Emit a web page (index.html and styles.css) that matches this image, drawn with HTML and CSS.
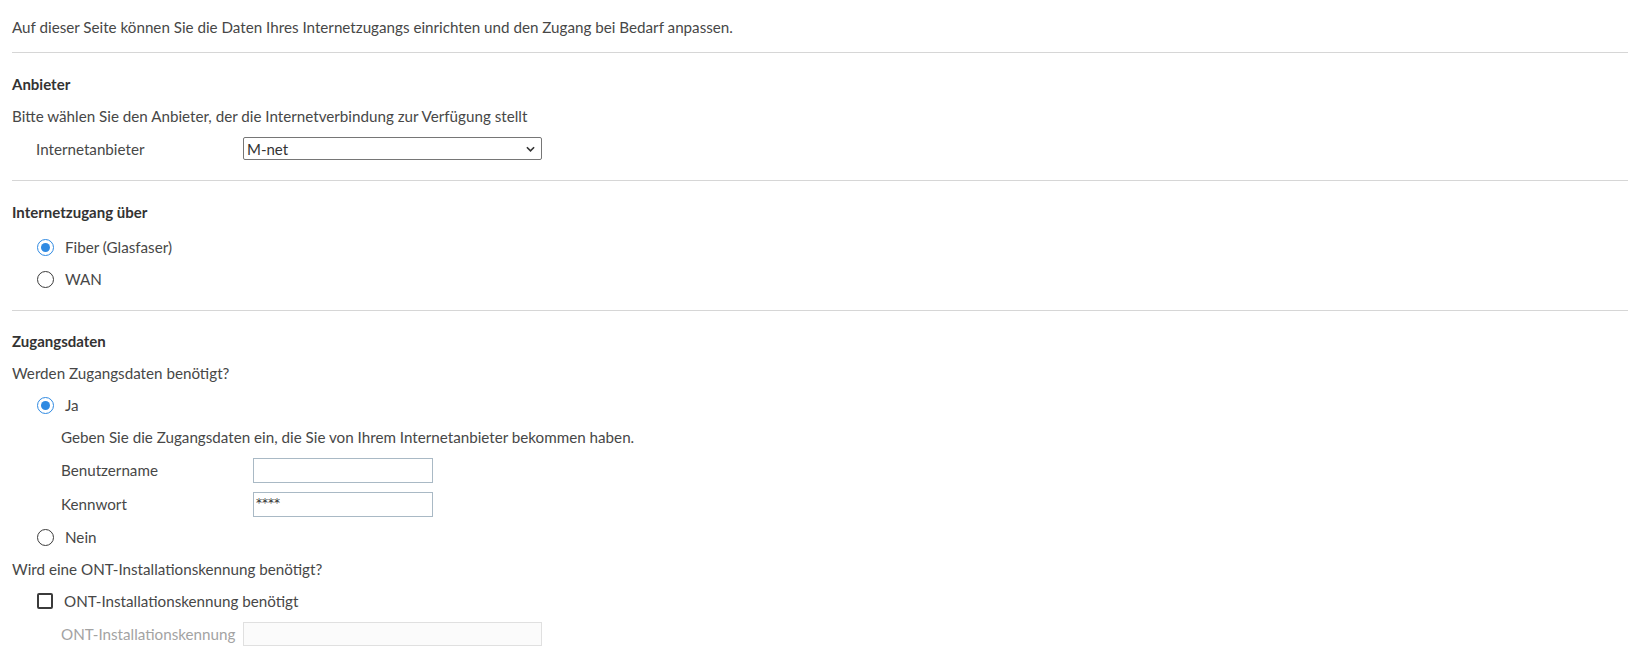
FILE: index.html
```html
<!DOCTYPE html>
<html lang="de">
<head>
    <meta charset="UTF-8">
    <meta name="viewport" content="width=device-width, initial-scale=1.0">
    <title>Internetzugang</title>
    <link rel="stylesheet" href="styles.css">
</head>
<body>
    <p class="intro">Auf dieser Seite können Sie die Daten Ihres Internetzugangs einrichten und den Zugang bei Bedarf anpassen.</p>
    <hr class="divider">

    <!-- Anbieter -->
    <div class="section">
        <h3 class="row">Anbieter</h3>
        <div class="row">Bitte wählen Sie den Anbieter, der die Internetverbindung zur Verfügung stellt</div>
        <div class="row provider">
            <label class="field-label" for="provider">Internetanbieter</label>
            <div class="select-wrap">
                <select id="provider" class="select">
                    <option>M-net</option>
                </select>
                <svg class="chevron" viewBox="0 0 10 6"><path d="M1 1 L5 5 L9 1" fill="none" stroke="#333" stroke-width="1.8"/></svg>
            </div>
        </div>
    </div>
    <hr class="divider">

    <!-- Internetzugang -->
    <div class="section">
        <h3 class="row">Internetzugang über</h3>
        <div class="options">
            <label class="row option"><input type="radio" name="access" class="radio" checked> Fiber (Glasfaser)</label>
            <label class="row option"><input type="radio" name="access" class="radio"> WAN</label>
        </div>
    </div>
    <hr class="divider">

    <!-- Zugangsdaten -->
    <div class="section last">
        <h3 class="row">Zugangsdaten</h3>
        <div class="row">Werden Zugangsdaten benötigt?</div>
        <label class="row option"><input type="radio" name="creds" class="radio" checked> Ja</label>
        <div class="sub">
            <div class="row">Geben Sie die Zugangsdaten ein, die Sie von Ihrem Internetanbieter bekommen haben.</div>
            <div class="row field">
                <label class="sub-label" for="user">Benutzername</label>
                <input id="user" type="text" class="text-input">
            </div>
            <div class="row field">
                <label class="sub-label" for="pass">Kennwort</label>
                <input id="pass" type="text" class="text-input secret" value="****">
            </div>
        </div>
        <label class="row option"><input type="radio" name="creds" class="radio"> Nein</label>
        <div class="row">Wird eine ONT-Installationskennung benötigt?</div>
        <label class="row option"><input type="checkbox" class="check"> ONT-Installationskennung benötigt</label>
        <div class="sub">
            <div class="row field disabled">
                <label for="ont">ONT-Installationskennung</label>
                <input id="ont" type="text" class="text-input ont" disabled>
            </div>
        </div>
    </div>
</body>
</html>
```

FILE: styles.css
```css
body {
    margin: 0;
    padding: 0 5px 0 12px;
    font-family: Lato, "Liberation Sans", sans-serif;
    font-size: 15.2px;
    color: #474747;
    background: white;
}
.intro {
    margin: 0;
    padding: 17px 0 15px;
    line-height: 20px;
}
.divider {
    margin: 0;
    border: none;
    border-top: 1px solid #d6d6d6;
    height: 0;
}
.section {
    padding-top: 15px;
    padding-bottom: 15px;
}
.section.last {
    padding-top: 14px;
}
.row {
    display: flex;
    align-items: center;
    min-height: 32px;
    margin: 0;
}
h3.row {
    font-size: 15px;
    font-weight: bold;
    color: #333;
}
.field {
    min-height: 34px;
}
.provider {
    min-height: 33px;
    padding-left: 24px;
}
.field-label {
    width: 207px;
}
.select-wrap {
    position: relative;
}
.select {
    appearance: none;
    -webkit-appearance: none;
    width: 299px;
    height: 23px;
    margin: 0;
    padding: 0 3px;
    border: 1px solid #767676;
    border-radius: 2px;
    background: white;
    font-family: inherit;
    font-size: 15px;
    color: #333;
}
.chevron {
    position: absolute;
    right: 7px;
    top: 9px;
    width: 9px;
    height: 6px;
    pointer-events: none;
}
.options {
    padding-top: 3px;
}
.option {
    padding-left: 25px;
    gap: 11px;
}
.radio {
    appearance: none;
    -webkit-appearance: none;
    width: 17px;
    height: 17px;
    margin: 0;
    border: 1.6px solid #3b3b3b;
    border-radius: 50%;
    background: white;
    display: grid;
    place-content: center;
}
.radio:checked {
    border-color: #2f8ae2;
}
.radio:checked::before {
    content: "";
    width: 9px;
    height: 9px;
    border-radius: 50%;
    background: #2f8ae2;
}
.check {
    appearance: none;
    -webkit-appearance: none;
    width: 16px;
    height: 16px;
    margin: 0;
    border: 2px solid #3b3b3b;
    border-radius: 2px;
    background: white;
}
.sub {
    padding-left: 49px;
}
.sub-label {
    width: 192px;
}
.text-input {
    box-sizing: border-box;
    width: 180px;
    height: 25px;
    margin: 0;
    padding: 0 2px;
    border: 1px solid #a9b9c5;
    font-family: inherit;
    font-size: 15px;
    background: white;
}
.secret {
    font-family: "DejaVu Sans", sans-serif;
    font-size: 12px;
    color: #333;
    padding-bottom: 3px;
}
.disabled {
    color: #a3a3a3;
    gap: 8px;
}
.text-input.ont {
    width: 299px;
    height: 24px;
    border-color: #e0e0e0;
    background: #fbfbfb;
}
```
